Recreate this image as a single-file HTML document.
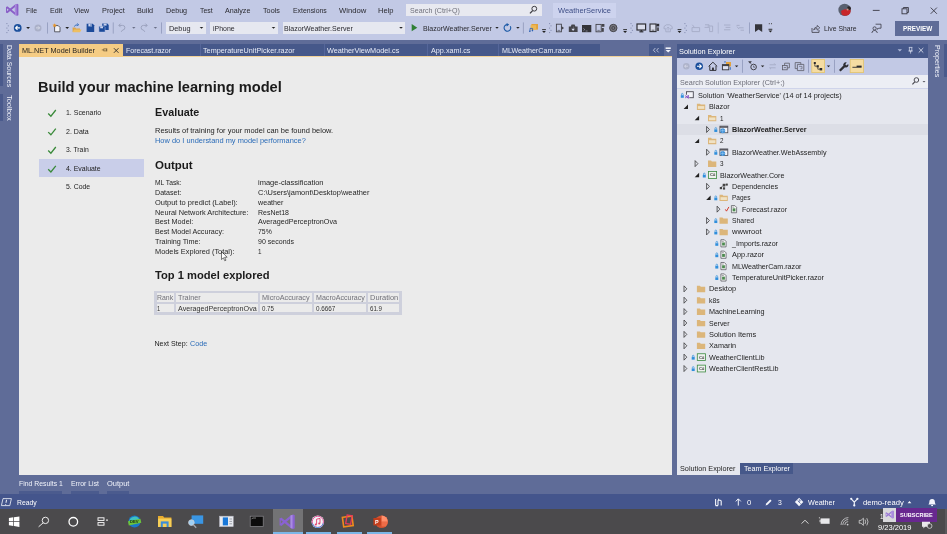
<!DOCTYPE html>
<html lang="en"><head><meta charset="utf-8"><title>WeatherService - Microsoft Visual Studio</title>
<style>
html,body{margin:0;padding:0;}
body{width:947px;height:534px;overflow:hidden;position:relative;background:#5d6b99;font-family:"Liberation Sans", sans-serif;}
.b{position:absolute;}
.t{position:absolute;white-space:nowrap;transform-origin:0 50%;font-family:"Liberation Sans", sans-serif;}
svg.ov{position:absolute;left:0;top:0;filter:blur(0.3px);}
.tx{position:absolute;left:0;top:0;width:947px;height:534px;will-change:transform;filter:blur(0.3px);}
</style></head><body>
<div class="b" style="left:0px;top:0px;width:947px;height:40px;background:#c2c9e5;"></div>
<div class="b" style="left:0px;top:40px;width:947px;height:455px;background:#5f6c98;"></div>
<div class="b" style="left:19px;top:57px;width:653px;height:418px;background:#ebebeb;"></div>
<div class="b" style="left:19px;top:56.2px;width:653px;height:0.9px;background:#f2d298;"></div>
<div class="b" style="left:0px;top:494px;width:947px;height:15px;background:#44558c;"></div>
<div class="b" style="left:0px;top:509px;width:947px;height:25px;background:#4b4a4c;"></div>
<div class="b" style="left:405.8px;top:3.7px;width:136.2px;height:12.7px;background:#e8e9f0;"></div>
<div class="b" style="left:553px;top:2.5px;width:63px;height:15.2px;background:#cdd3ee;"></div>
<div class="b" style="left:166.4px;top:21.6px;width:39.599999999999994px;height:12.5px;background:#e6e8f0;"></div>
<div class="b" style="left:210.2px;top:21.6px;width:67.5px;height:12.5px;background:#e6e8f0;"></div>
<div class="b" style="left:282.5px;top:21.6px;width:122.80000000000001px;height:12.5px;background:#e6e8f0;"></div>
<div class="b" style="left:895px;top:21.1px;width:43.7px;height:15.2px;background:#5f6c98;"></div>
<div class="b" style="left:123px;top:44px;width:477px;height:12px;background:#46588a;"></div>
<div class="b" style="left:19px;top:44px;width:104px;height:13px;background:#f5cc84;"></div>
<div class="b" style="left:200.0px;top:44px;width:1px;height:12px;background:#55669a;"></div>
<div class="b" style="left:324.2px;top:44px;width:1px;height:12px;background:#55669a;"></div>
<div class="b" style="left:426.8px;top:44px;width:1px;height:12px;background:#55669a;"></div>
<div class="b" style="left:498.1px;top:44px;width:1px;height:12px;background:#55669a;"></div>
<div class="b" style="left:649.2px;top:44px;width:14.6px;height:12px;background:#46588a;"></div>
<div class="b" style="left:39px;top:159.2px;width:104.8px;height:18.2px;background:#c9cee9;"></div>
<div class="b" style="left:154.4px;top:291.2px;width:247.2px;height:2.2px;background:#ced0dc;"></div>
<div class="b" style="left:154.4px;top:312.4px;width:247.2px;height:2.2px;background:#ced0dc;"></div>
<div class="b" style="left:154.4px;top:301.7px;width:247.2px;height:2.2px;background:#ced0dc;"></div>
<div class="b" style="left:154.4px;top:291.2px;width:2.2px;height:23.4px;background:#ced0dc;"></div>
<div class="b" style="left:399.4px;top:291.2px;width:2.2px;height:23.4px;background:#ced0dc;"></div>
<div class="b" style="left:174.0px;top:291.2px;width:2.2px;height:23.4px;background:#ced0dc;"></div>
<div class="b" style="left:258.29999999999995px;top:291.2px;width:2.2px;height:23.4px;background:#ced0dc;"></div>
<div class="b" style="left:311.5px;top:291.2px;width:2.2px;height:23.4px;background:#ced0dc;"></div>
<div class="b" style="left:365.9px;top:291.2px;width:2.2px;height:23.4px;background:#ced0dc;"></div>
<div class="b" style="left:677px;top:44px;width:251px;height:13.5px;background:#46588a;"></div>
<div class="b" style="left:677px;top:57.5px;width:251px;height:17.5px;background:#c2c9e5;"></div>
<div class="b" style="left:677px;top:75px;width:251px;height:388px;background:#e5e7ee;"></div>
<div class="b" style="left:677px;top:75.4px;width:251px;height:12.6px;background:#eceef4;"></div>
<div class="b" style="left:677px;top:88px;width:251px;height:1px;background:#cfd4ea;"></div>
<div class="b" style="left:677px;top:123.6px;width:251px;height:11.4px;background:#dcdee6;"></div>
<div class="b" style="left:677px;top:463px;width:62.7px;height:12px;background:#e5e7ee;"></div>
<div class="b" style="left:739.7px;top:463px;width:53.2px;height:11px;background:#46588a;"></div>
<div class="b" style="left:18.6px;top:490.6px;width:43.9px;height:3.4px;background:#4b5b8e;"></div>
<div class="b" style="left:71px;top:490.6px;width:28px;height:3.4px;background:#4b5b8e;"></div>
<div class="b" style="left:106.8px;top:490.6px;width:22.39999999999999px;height:3.4px;background:#4b5b8e;"></div>
<div class="b" style="left:273px;top:509px;width:30px;height:25px;background:#737375;"></div>
<div class="b" style="left:273px;top:532.3px;width:30px;height:1.7px;background:#7cb7e8;"></div>
<div class="b" style="left:306px;top:532.3px;width:25px;height:1.7px;background:#7cb7e8;"></div>
<div class="b" style="left:337px;top:532.3px;width:25px;height:1.7px;background:#7cb7e8;"></div>
<div class="b" style="left:367px;top:532.3px;width:25px;height:1.7px;background:#7cb7e8;"></div>
<div class="b" style="left:883px;top:508.2px;width:13.2px;height:13.5px;background:#d9d9dc;"></div>
<div class="b" style="left:896.2px;top:508.2px;width:40.6px;height:13.5px;background:#68288f;"></div>
<div class="b" style="left:945px;top:509px;width:2px;height:25px;background:#5a595c;"></div>
<div class="b" style="left:0px;top:43.7px;width:2.5px;height:42.7px;background:#4a5a8c;"></div>
<div class="b" style="left:0px;top:94.3px;width:2.5px;height:26.3px;background:#4a5a8c;"></div>
<div class="b" style="left:944.3px;top:44px;width:2.7px;height:33px;background:#4a5a8c;"></div>
<svg class="ov" width="947" height="534" viewBox="0 0 947 534">
<path d="M48.2 113.5 L50.9 116.2 L55.8 110.0" fill="none" stroke="#3a8a3a" stroke-width="1.3"/>
<path d="M48.2 132.10000000000002 L50.9 134.8 L55.8 128.60000000000002" fill="none" stroke="#3a8a3a" stroke-width="1.3"/>
<path d="M48.2 150.5 L50.9 153.2 L55.8 147.0" fill="none" stroke="#3a8a3a" stroke-width="1.3"/>
<path d="M48.2 169.3 L50.9 172 L55.8 165.8" fill="none" stroke="#3a8a3a" stroke-width="1.3"/>
<path d="M221.5 251.5 l0 8 l1.9 -1.7 l1.4 3 l1.2 -0.6 l-1.4 -2.9 l2.5 -0.1 z" fill="#fff" stroke="#222" stroke-width="0.6"/>
<rect x="686.5" y="91.7" width="6.8" height="6" fill="#f4f4f8" stroke="#4a4a52" stroke-width="0.9"/><rect x="684.6999999999999" y="94.7" width="4.6" height="4.2" fill="#e5e7ee"/><path d="M685.1999999999999 95.7 l1.6 1.1 l-1.6 1.1 M688.3 95.3 v3 l-1.4 -1.5 z" stroke="#7a3fc0" stroke-width="0.9" fill="none"/>
<rect x="680.8" y="95.2" width="3" height="2.6" fill="#2f8fdc"/><path d="M681.5 95.2 v-1 a0.8 0.8 0 0 1 1.6 0 v1" fill="none" stroke="#2f8fdc" stroke-width="0.7"/>
<path d="M696.9 103.685 h3 l0.9 0.9 h4.4 v5.4 h-8.3 z" fill="#dcb67a"/><path d="M697.9 106.08500000000001 h6.4 v2.8 h-6.4 z" fill="#f0e2c4"/>
<path d="M688.0 104.485 v4.4 h-4.4 z" fill="#222"/>
<path d="M708 115.07 h3 l0.9 0.9 h4.4 v5.4 h-8.3 z" fill="#dcb67a"/><path d="M709 117.47 h6.4 v2.8 h-6.4 z" fill="#f0e2c4"/>
<path d="M699.1 115.86999999999999 v4.4 h-4.4 z" fill="#222"/>
<rect x="719.9" y="126.15500000000002" width="7.9" height="6.6" fill="#f4f4f8" stroke="#4a4a52" stroke-width="0.8"/><path d="M719.9 127.055 h7.9" stroke="#4a4a52" stroke-width="1.4"/><circle cx="722.7" cy="130.655" r="2.5" fill="#3d8fd6"/><path d="M720.4 130.655 h4.6 M722.7 128.35500000000002 v4.6" stroke="#bfe0fa" stroke-width="0.4"/>
<rect x="714.3" y="129.35500000000002" width="3" height="2.6" fill="#2f8fdc"/><path d="M715.0 129.35500000000002 v-1 a0.8 0.8 0 0 1 1.6 0 v1" fill="none" stroke="#2f8fdc" stroke-width="0.7"/>
<path d="M706.6 126.45500000000001 l2.8 3 l-2.8 3 z" fill="none" stroke="#222" stroke-width="0.7"/>
<path d="M708 137.84 h3 l0.9 0.9 h4.4 v5.4 h-8.3 z" fill="#dcb67a"/><path d="M709 140.24 h6.4 v2.8 h-6.4 z" fill="#f0e2c4"/>
<path d="M699.1 138.64000000000001 v4.4 h-4.4 z" fill="#222"/>
<rect x="719.9" y="148.925" width="7.9" height="6.6" fill="#f4f4f8" stroke="#4a4a52" stroke-width="0.8"/><path d="M719.9 149.82500000000002 h7.9" stroke="#4a4a52" stroke-width="1.4"/><circle cx="722.7" cy="153.425" r="2.5" fill="#3d8fd6"/><path d="M720.4 153.425 h4.6 M722.7 151.12500000000003 v4.6" stroke="#bfe0fa" stroke-width="0.4"/>
<rect x="714.3" y="152.12500000000003" width="3" height="2.6" fill="#2f8fdc"/><path d="M715.0 152.12500000000003 v-1 a0.8 0.8 0 0 1 1.6 0 v1" fill="none" stroke="#2f8fdc" stroke-width="0.7"/>
<path d="M706.6 149.22500000000002 l2.8 3 l-2.8 3 z" fill="none" stroke="#222" stroke-width="0.7"/>
<path d="M708 160.61 h3 l0.9 0.9 h4.4 v5.4 h-8.3 z" fill="#dcb67a"/>
<path d="M695.1 160.61 l2.8 3 l-2.8 3 z" fill="none" stroke="#222" stroke-width="0.7"/>
<rect x="708.4" y="171.595" width="8.2" height="6.8" fill="#eef1ee" stroke="#3b8a3f" stroke-width="0.8"/>
<rect x="702.8" y="174.895" width="3" height="2.6" fill="#2f8fdc"/><path d="M703.5 174.895 v-1 a0.8 0.8 0 0 1 1.6 0 v1" fill="none" stroke="#2f8fdc" stroke-width="0.7"/>
<path d="M699.1 172.79500000000002 v4.4 h-4.4 z" fill="#222"/>
<rect x="719.8" y="186.98" width="2.2" height="2.2" fill="#444"/><rect x="722.7" y="183.78" width="2.6" height="2.6" fill="#444"/><rect x="722.9" y="187.38" width="2.2" height="2.2" fill="#444"/><rect x="725.8" y="183.57999999999998" width="2" height="2" fill="#444"/><path d="M720.9 187.38 l2 -1.4 M724.0 186.38 v1.2 M725.3 184.78 h1" stroke="#444" stroke-width="0.6"/>
<path d="M706.6 183.38 l2.8 3 l-2.8 3 z" fill="none" stroke="#222" stroke-width="0.7"/>
<path d="M719.5 194.76500000000001 h3 l0.9 0.9 h4.4 v5.4 h-8.3 z" fill="#dcb67a"/><path d="M720.5 197.16500000000002 h6.4 v2.8 h-6.4 z" fill="#f0e2c4"/>
<rect x="714.3" y="197.66500000000002" width="3" height="2.6" fill="#2f8fdc"/><path d="M715.0 197.66500000000002 v-1 a0.8 0.8 0 0 1 1.6 0 v1" fill="none" stroke="#2f8fdc" stroke-width="0.7"/>
<path d="M710.6 195.56500000000003 v4.4 h-4.4 z" fill="#222"/>
<path d="M731.4 205.55 h3.4 l1.8 1.8 v5.4 h-5.2 z" fill="#f7f7f7" stroke="#4a4a52" stroke-width="0.7"/><path d="M732.6 208.35 h2.8 v3 h-2.8 z" fill="#4d8a50"/><path d="M732.3000000000001 207.15 h2" stroke="#4a4a52" stroke-width="0.5"/>
<path d="M725.3 209.35 l1.2 1.8 l2.4 -4.2" fill="none" stroke="#d33a2c" stroke-width="1"/>
<path d="M717.1 206.15 l2.8 3 l-2.8 3 z" fill="none" stroke="#222" stroke-width="0.7"/>
<path d="M719.5 217.53500000000003 h3 l0.9 0.9 h4.4 v5.4 h-8.3 z" fill="#dcb67a"/>
<rect x="714.3" y="220.43500000000003" width="3" height="2.6" fill="#2f8fdc"/><path d="M715.0 220.43500000000003 v-1 a0.8 0.8 0 0 1 1.6 0 v1" fill="none" stroke="#2f8fdc" stroke-width="0.7"/>
<path d="M706.6 217.53500000000003 l2.8 3 l-2.8 3 z" fill="none" stroke="#222" stroke-width="0.7"/>
<path d="M719.5 228.92000000000002 h3 l0.9 0.9 h4.4 v5.4 h-8.3 z" fill="#dcb67a"/>
<rect x="714.3" y="231.82000000000002" width="3" height="2.6" fill="#2f8fdc"/><path d="M715.0 231.82000000000002 v-1 a0.8 0.8 0 0 1 1.6 0 v1" fill="none" stroke="#2f8fdc" stroke-width="0.7"/>
<path d="M706.6 228.92000000000002 l2.8 3 l-2.8 3 z" fill="none" stroke="#222" stroke-width="0.7"/>
<path d="M720.9 239.705 h3.4 l1.8 1.8 v5.4 h-5.2 z" fill="#f7f7f7" stroke="#4a4a52" stroke-width="0.7"/><path d="M722.1 242.505 h2.8 v3 h-2.8 z" fill="#4d8a50"/><path d="M721.8000000000001 241.305 h2" stroke="#4a4a52" stroke-width="0.5"/>
<rect x="715.3" y="243.205" width="3" height="2.6" fill="#2f8fdc"/><path d="M716.0 243.205 v-1 a0.8 0.8 0 0 1 1.6 0 v1" fill="none" stroke="#2f8fdc" stroke-width="0.7"/>
<path d="M720.9 251.09 h3.4 l1.8 1.8 v5.4 h-5.2 z" fill="#f7f7f7" stroke="#4a4a52" stroke-width="0.7"/><path d="M722.1 253.89 h2.8 v3 h-2.8 z" fill="#4d8a50"/><path d="M721.8000000000001 252.69 h2" stroke="#4a4a52" stroke-width="0.5"/>
<rect x="715.3" y="254.59" width="3" height="2.6" fill="#2f8fdc"/><path d="M716.0 254.59 v-1 a0.8 0.8 0 0 1 1.6 0 v1" fill="none" stroke="#2f8fdc" stroke-width="0.7"/>
<path d="M720.9 262.47499999999997 h3.4 l1.8 1.8 v5.4 h-5.2 z" fill="#f7f7f7" stroke="#4a4a52" stroke-width="0.7"/><path d="M722.1 265.275 h2.8 v3 h-2.8 z" fill="#4d8a50"/><path d="M721.8000000000001 264.075 h2" stroke="#4a4a52" stroke-width="0.5"/>
<rect x="715.3" y="265.97499999999997" width="3" height="2.6" fill="#2f8fdc"/><path d="M716.0 265.97499999999997 v-1 a0.8 0.8 0 0 1 1.6 0 v1" fill="none" stroke="#2f8fdc" stroke-width="0.7"/>
<path d="M720.9 273.85999999999996 h3.4 l1.8 1.8 v5.4 h-5.2 z" fill="#f7f7f7" stroke="#4a4a52" stroke-width="0.7"/><path d="M722.1 276.65999999999997 h2.8 v3 h-2.8 z" fill="#4d8a50"/><path d="M721.8000000000001 275.46 h2" stroke="#4a4a52" stroke-width="0.5"/>
<rect x="715.3" y="277.35999999999996" width="3" height="2.6" fill="#2f8fdc"/><path d="M716.0 277.35999999999996 v-1 a0.8 0.8 0 0 1 1.6 0 v1" fill="none" stroke="#2f8fdc" stroke-width="0.7"/>
<path d="M696.9 285.84499999999997 h3 l0.9 0.9 h4.4 v5.4 h-8.3 z" fill="#dcb67a"/>
<path d="M684.0 285.84499999999997 l2.8 3 l-2.8 3 z" fill="none" stroke="#222" stroke-width="0.7"/>
<path d="M696.9 297.23 h3 l0.9 0.9 h4.4 v5.4 h-8.3 z" fill="#dcb67a"/>
<path d="M684.0 297.23 l2.8 3 l-2.8 3 z" fill="none" stroke="#222" stroke-width="0.7"/>
<path d="M696.9 308.615 h3 l0.9 0.9 h4.4 v5.4 h-8.3 z" fill="#dcb67a"/>
<path d="M684.0 308.615 l2.8 3 l-2.8 3 z" fill="none" stroke="#222" stroke-width="0.7"/>
<path d="M696.9 320.0 h3 l0.9 0.9 h4.4 v5.4 h-8.3 z" fill="#dcb67a"/>
<path d="M684.0 320.0 l2.8 3 l-2.8 3 z" fill="none" stroke="#222" stroke-width="0.7"/>
<path d="M696.9 331.38500000000005 h3 l0.9 0.9 h4.4 v5.4 h-8.3 z" fill="#dcb67a"/>
<path d="M684.0 331.38500000000005 l2.8 3 l-2.8 3 z" fill="none" stroke="#222" stroke-width="0.7"/>
<path d="M696.9 342.77000000000004 h3 l0.9 0.9 h4.4 v5.4 h-8.3 z" fill="#dcb67a"/>
<path d="M684.0 342.77000000000004 l2.8 3 l-2.8 3 z" fill="none" stroke="#222" stroke-width="0.7"/>
<rect x="697.3" y="353.75500000000005" width="8.2" height="6.8" fill="#eef1ee" stroke="#3b8a3f" stroke-width="0.8"/>
<rect x="691.6999999999999" y="357.055" width="3" height="2.6" fill="#2f8fdc"/><path d="M692.4 357.055 v-1 a0.8 0.8 0 0 1 1.6 0 v1" fill="none" stroke="#2f8fdc" stroke-width="0.7"/>
<path d="M684.0 354.15500000000003 l2.8 3 l-2.8 3 z" fill="none" stroke="#222" stroke-width="0.7"/>
<rect x="697.3" y="365.14000000000004" width="8.2" height="6.8" fill="#eef1ee" stroke="#3b8a3f" stroke-width="0.8"/>
<rect x="691.6999999999999" y="368.44" width="3" height="2.6" fill="#2f8fdc"/><path d="M692.4 368.44 v-1 a0.8 0.8 0 0 1 1.6 0 v1" fill="none" stroke="#2f8fdc" stroke-width="0.7"/>
<path d="M684.0 365.54 l2.8 3 l-2.8 3 z" fill="none" stroke="#222" stroke-width="0.7"/>
<path d="M6.80 7.00 L15.40 14.00 M6.80 12.60 L15.40 5.60" stroke="#8a5fc8" stroke-width="1.90" fill="none"/>
<path d="M6.50 6.80 V12.80" stroke="#8a5fc8" stroke-width="1.00" fill="none"/>
<path d="M14.90 4.70 L17.20 3.80 L18.40 4.40 V15.20 L17.20 15.80 L14.90 14.90 z" fill="#8a5fc8"/>
<path d="M14.90 4.70 L16.60 4.10 V15.50 L14.90 14.90 z" fill="#a888dc"/>
<circle cx="534.3" cy="8.7" r="2.4" fill="none" stroke="#3a3a40" stroke-width="1"/><path d="M532.6 10.6 l-2.6 2.8" stroke="#3a3a40" stroke-width="1.3"/>
<circle cx="844.6" cy="9.9" r="6.2" fill="#596070"/><path d="M841 11 q3 -2.4 6 -1.6 l3 -0.4 q1.4 1.6 0.2 4.2 a6.2 6.2 0 0 1 -8.4 1.6 z" fill="#c8262a"/><circle cx="849" cy="8.2" r="1.9" fill="#2c2628"/><circle cx="847.6" cy="9.6" r="1" fill="#c89a8a"/>
<path d="M872.8 10.4 h6.8" stroke="#3a3a45" stroke-width="0.9"/>
<rect x="902" y="8.8" width="5" height="5" fill="none" stroke="#3a3a45" stroke-width="0.9"/><path d="M903.4 8.8 v-1.3 h5 v5 h-1.4" fill="none" stroke="#3a3a45" stroke-width="0.9"/>
<path d="M930.7 7.6 l6.2 6.2 M936.9 7.6 l-6.2 6.2" stroke="#3a3a45" stroke-width="0.9"/>
<rect x="6.3999999999999995" y="23.1" width="1" height="1" fill="#7f88ad"/>
<rect x="7.8" y="25.35" width="1" height="1" fill="#7f88ad"/>
<rect x="6.3999999999999995" y="27.6" width="1" height="1" fill="#7f88ad"/>
<rect x="7.8" y="29.85" width="1" height="1" fill="#7f88ad"/>
<rect x="6.3999999999999995" y="32.1" width="1" height="1" fill="#7f88ad"/>
<circle cx="17.7" cy="27.9" r="3.9" fill="#1b4f9c"/><path d="M19.9 27.9 h-4 M17.5 26 l-1.9 1.9 l1.9 1.9" fill="none" stroke="#fff" stroke-width="1.1"/>
<path d="M26.200000000000003 27 h3.8 l-1.9 1.9 z" fill="#222"/>
<circle cx="38" cy="27.9" r="3.5" fill="#aab0c8"/><path d="M36 27.9 h3.6 M38 26.3 l1.6 1.6 l-1.6 1.6" fill="none" stroke="#d9dcea" stroke-width="0.9"/>
<rect x="47.1" y="22.4" width="0.8" height="11.200000000000003" fill="#8f98ba"/>
<path d="M54.6 25.6 h3.6 l1.8 1.8 v4.4 h-5.4 z" fill="#f2f3f8" stroke="#3c3c44" stroke-width="0.8"/><path d="M54.6 23.2 l0.6 1.4 l1.5 0.1 l-1.1 1 l0.4 1.5 l-1.4 -0.8 l-1.4 0.8 l0.4 -1.5 l-1.1 -1 l1.5 -0.1 z" fill="#e8962a"/>
<path d="M65.3 27 h3.8 l-1.9 1.9 z" fill="#222"/>
<path d="M72.6 27.6 h2.6 l0.8 0.9 h4 v3.6 h-7.4 z" fill="#dca54a"/><path d="M74 29.6 h7.6 l-1.6 2.6 h-7.4 z" fill="#eebf62"/><path d="M74.4 26.6 q0.6 -2 3 -1.8 M77.4 23.4 l1.2 1.6 l-1.8 0.6" fill="none" stroke="#2a66b8" stroke-width="0.9"/>
<path d="M86.6 23.8 h6.2 l1.4 1.4 v6.7 h-7.6 z" fill="#1b4a9a"/><rect x="88.4" y="23.8" width="3.6" height="2.6" fill="#c9d2ee"/><rect x="90.6" y="24.1" width="0.9" height="1.8" fill="#1b4a9a"/>
<path d="M102.2 23.6 h5.2 l1.3 1.3 v5 h-6.5 z" fill="#1b4a9a"/><rect x="103.6" y="23.6" width="3" height="2" fill="#c9d2ee"/><path d="M98.9 26.2 h5 l1.2 1.2 v4.7 h-6.2 z" fill="#1b4a9a" stroke="#c5cce8" stroke-width="0.5"/><rect x="100.2" y="26.4" width="2.8" height="1.9" fill="#c9d2ee"/>
<rect x="112.8" y="22.4" width="0.8" height="11.200000000000003" fill="#8f98ba"/>
<path d="M119 25.4 h3.6 a2.3 2.3 0 0 1 0 4.6 l-1.4 1.8 M120.6 23.6 l-1.8 1.8 l1.8 1.8" fill="none" stroke="#9ba2bd" stroke-width="1"/>
<path d="M132.10000000000002 27 h3.4 l-1.7 1.7 z" fill="#6a7088"/>
<path d="M147 25.4 h-3.6 a2.3 2.3 0 0 0 0 4.6 l1.4 1.8 M145.4 23.6 l1.8 1.8 l-1.8 1.8" fill="none" stroke="#9ba2bd" stroke-width="1"/>
<path d="M153.70000000000002 27 h3.4 l-1.7 1.7 z" fill="#6a7088"/>
<rect x="161.2" y="22.4" width="0.8" height="11.200000000000003" fill="#8f98ba"/>
<path d="M199.7 27 h3.6 l-1.8 1.8 z" fill="#222"/>
<path d="M271.7 27 h3.6 l-1.8 1.8 z" fill="#222"/>
<path d="M399.2 27 h3.6 l-1.8 1.8 z" fill="#222"/>
<path d="M411.7 24.1 l5.6 3.6 l-5.6 3.6 z" fill="#2f7f34"/>
<path d="M495.3 27 h3.4 l-1.7 1.7 z" fill="#222"/>
<path d="M510.3 26.3 a3.3 3.3 0 1 1 -2.8 -1.7" fill="none" stroke="#1c5aa6" stroke-width="1.1"/><path d="M506.6 22.9 l2.6 1.6 l-2.4 1.9 z" fill="#1c5aa6"/>
<path d="M516.1999999999999 27 h3.4 l-1.7 1.7 z" fill="#222"/>
<rect x="522.9" y="22.4" width="0.8" height="11.200000000000003" fill="#8f98ba"/>
<rect x="531.4" y="24" width="6.6" height="5.6" fill="#e2a23c"/><rect x="530.6" y="25.2" width="5.6" height="4.6" fill="#ecb856"/><path d="M530 31.4 v-3 h2.6 v2.2" fill="none" stroke="#2a5fb0" stroke-width="0.8"/><circle cx="529.8" cy="31.2" r="0.8" fill="#2a5fb0"/><circle cx="532.4" cy="30.6" r="0.8" fill="#2a5fb0"/>
<rect x="542.1" y="29.2" width="3.8" height="0.9" fill="#222"/><path d="M542.1 30.9 h3.8 l-1.9 2 z" fill="#222"/>
<rect x="549.0999999999999" y="23.1" width="1" height="1" fill="#7f88ad"/>
<rect x="550.5" y="25.35" width="1" height="1" fill="#7f88ad"/>
<rect x="549.0999999999999" y="27.6" width="1" height="1" fill="#7f88ad"/>
<rect x="550.5" y="29.85" width="1" height="1" fill="#7f88ad"/>
<rect x="549.0999999999999" y="32.1" width="1" height="1" fill="#7f88ad"/>
<rect x="556.4" y="24.2" width="5" height="7.6" fill="none" stroke="#44444a" stroke-width="0.9"/><path d="M561.4 26 l2.6 2 l-2.6 2 z" fill="#44444a"/><path d="M557.6 30.4 h2.6" stroke="#44444a" stroke-width="0.6"/>
<path d="M568.8 26.4 h2 l0.8 -1.8 h3 l0.8 1.8 h2.2 v5.6 h-8.8 z" fill="#44444a"/><path d="M573.2 26.6 v2.2 h1.6 l-1.7 2.2 l-1.7 -2.2 h1.6 v-2.2 z" fill="#d8dcee"/>
<rect x="582" y="25" width="9.3" height="7.2" fill="#333338"/><path d="M583.4 28.4 l1.4 1.2 l-1.4 1.2 M585.6 31 h2" stroke="#c8cce0" stroke-width="0.5" fill="none"/>
<rect x="596" y="24.4" width="5.2" height="7.4" fill="none" stroke="#44444a" stroke-width="0.9"/><rect x="601.6" y="24" width="2.8" height="2.8" fill="#44444a"/><rect x="601.6" y="28" width="2.2" height="3.8" fill="#44444a"/><path d="M597.4 30.4 h2.4" stroke="#44444a" stroke-width="0.6"/>
<circle cx="613.3" cy="28" r="3.7" fill="#77777e" stroke="#44444a" stroke-width="1"/><circle cx="613.3" cy="28" r="1.5" fill="none" stroke="#3a3a40" stroke-width="0.8"/>
<rect x="623.2" y="29.2" width="3.8" height="0.9" fill="#222"/><path d="M623.2 30.9 h3.8 l-1.9 2 z" fill="#222"/>
<rect x="630.5" y="23.1" width="1" height="1" fill="#7f88ad"/>
<rect x="631.9000000000001" y="25.35" width="1" height="1" fill="#7f88ad"/>
<rect x="630.5" y="27.6" width="1" height="1" fill="#7f88ad"/>
<rect x="631.9000000000001" y="29.85" width="1" height="1" fill="#7f88ad"/>
<rect x="630.5" y="32.1" width="1" height="1" fill="#7f88ad"/>
<rect x="637" y="24" width="8.6" height="6" fill="#d9dcea" stroke="#2e2e33" stroke-width="1.2"/><rect x="639.4" y="31.2" width="4" height="1.2" fill="#2e2e33"/><rect x="640.6" y="30" width="1.6" height="1.6" fill="#2e2e33"/>
<rect x="650" y="24" width="6" height="7.6" fill="#d9dcea" stroke="#2e2e33" stroke-width="1.1"/><rect x="656.4" y="23.8" width="2.8" height="2.6" fill="#2e2e33"/><rect x="656.8" y="27.4" width="2.2" height="3.6" fill="#55555c"/><path d="M651.6 30.2 h2.8" stroke="#2e2e33" stroke-width="0.7"/>
<path d="M664 26.6 l2.4 -1.8 h3.4 l2.4 1.8 v2.2 h-1.8 v3 h-4.6 v-3 h-1.8 z" fill="none" stroke="#a5abc6" stroke-width="0.9"/><path d="M668.1 27 v3.6 M666.6 28.6 l1.5 -1.6 l1.5 1.6" fill="none" stroke="#a5abc6" stroke-width="0.8"/>
<rect x="677.6" y="29.2" width="3.8" height="0.9" fill="#222"/><path d="M677.6 30.9 h3.8 l-1.9 2 z" fill="#222"/>
<rect x="684.4" y="23.1" width="1" height="1" fill="#7f88ad"/>
<rect x="685.8000000000001" y="25.35" width="1" height="1" fill="#7f88ad"/>
<rect x="684.4" y="27.6" width="1" height="1" fill="#7f88ad"/>
<rect x="685.8000000000001" y="29.85" width="1" height="1" fill="#7f88ad"/>
<rect x="684.4" y="32.1" width="1" height="1" fill="#7f88ad"/>
<path d="M692.4 24.8 l1.8 2.4 M692 27.6 h7.6 v4 h-7.6 z" fill="none" stroke="#a5abc6" stroke-width="0.9"/>
<path d="M705 24.8 h4 v1.6 M704.6 27.4 h5 v4.2 M707.6 26 h5 v5.6 h-3" fill="none" stroke="#a5abc6" stroke-width="0.9"/>
<rect x="717.8000000000001" y="22.4" width="0.8" height="11.200000000000003" fill="#aab1cd"/>
<path d="M724 25 h6.4 M725.6 27.4 h4.8 M724 29.8 h6.4" stroke="#a5abc6" stroke-width="0.9"/>
<path d="M736.6 25.4 h3 M739 27.8 h4.6 M740.6 30.2 h3.4 M737 26.6 l2 2.4" stroke="#a5abc6" stroke-width="0.9" fill="none"/>
<rect x="749.1" y="22.4" width="0.8" height="11.200000000000003" fill="#8f98ba"/>
<path d="M755 24.3 h7.2 v7.6 l-3.6 -2.4 l-3.6 2.4 z" fill="#34343a"/>
<rect x="768.5" y="28.8" width="3.8" height="0.9" fill="#222"/><path d="M768.5 30.5 h3.8 l-1.9 2 z" fill="#222"/>
<rect x="768.8" y="23.200000000000003" width="1" height="1" fill="#444"/><rect x="771.0" y="23.200000000000003" width="1" height="1" fill="#444"/>
<path d="M812 28 v4.4 h7 v-2.4" fill="none" stroke="#4a4a55" stroke-width="0.9"/><path d="M813.6 30 q0.6 -3 3.6 -3 v-1.6 l2.6 2.4 l-2.6 2.4 v-1.6 q-2 -0.2 -3.6 1.4 z" fill="none" stroke="#4a4a55" stroke-width="0.8"/>
<circle cx="874.6" cy="28.4" r="1.6" fill="none" stroke="#3a3a45" stroke-width="0.8"/><path d="M871.8 33 q0.4 -2.6 2.8 -2.6 q2.2 0 2.8 2.6" fill="none" stroke="#3a3a45" stroke-width="0.8"/><path d="M875.6 24.2 h5.4 v4 h-2.4 l-1.2 1.2 v-1.2" fill="none" stroke="#3a3a45" stroke-width="0.8"/>
<rect x="103.8" y="48.9" width="2.8" height="2" fill="none" stroke="#6a5532" stroke-width="0.7"/><path d="M106.8 48.4 v3 M101.8 49.9 h2" stroke="#6a5532" stroke-width="0.7"/>
<path d="M113.9 48.2 l4.6 4.6 M118.5 48.2 l-4.6 4.6" stroke="#2a2a2a" stroke-width="0.9"/>
<path d="M655.4 48 l-2 2.2 l2 2.2 M658.6 48 l-2 2.2 l2 2.2" fill="none" stroke="#e6eaf8" stroke-width="0.7"/>
<rect x="665.6" y="47.4" width="5.2" height="1.6" fill="#f0f2fa"/><path d="M665.6 50 h5.2 l-2.6 2.6 z" fill="#f0f2fa"/>
<path d="M897.6 49.2 h4.4 l-2.2 2.4 z" fill="#aeb8d8"/>
<path d="M908.8 47.4 h3.6 M909.4 47.4 v3.6 h2.4 v-3.6 M908.4 51 h4.4 M910.6 51 v2.6" fill="none" stroke="#dfe4f4" stroke-width="0.7"/>
<path d="M918.7 48 l4.6 4.6 M923.3 48 l-4.6 4.6" stroke="#eef0fa" stroke-width="0.8"/>
<circle cx="686.3" cy="66.2" r="3.3" fill="#adb3ca"/><path d="M688 66.2 h-3.4 M686.2 64.7 l-1.6 1.5 l1.6 1.5" fill="none" stroke="#d9dcea" stroke-width="0.8"/>
<circle cx="699.2" cy="66.2" r="3.8" fill="#1b4f9c"/><path d="M697 66.2 h4 M699.4 64.3 l1.9 1.9 l-1.9 1.9" fill="none" stroke="#fff" stroke-width="1.1"/>
<path d="M708.6 66.4 l4.3 -4.2 l4.3 4.2 M709.8 65.8 v4.6 h6.2 v-4.6" fill="none" stroke="#34343a" stroke-width="1"/><rect x="712" y="67.60000000000001" width="1.9" height="2.8" fill="#34343a"/>
<rect x="726" y="62.0" width="5" height="4.4" fill="#e2a23c"/><rect x="722.4" y="64.60000000000001" width="6.4" height="5.2" fill="#dfe3f2" stroke="#34343a" stroke-width="0.9"/><path d="M722.4 65.60000000000001 h6.4" stroke="#34343a" stroke-width="1"/><path d="M724 62.2 q1 -1 2 0 M730.4 67.2 v2.6" stroke="#2a66b8" stroke-width="0.8" fill="none"/>
<path d="M734.9 65.60000000000001 h3.4 l-1.7 1.7 z" fill="#222"/>
<rect x="742.1" y="59.6" width="0.8" height="13.199999999999996" fill="#8f98ba"/>
<circle cx="753.6" cy="67.0" r="2.8" fill="none" stroke="#34343a" stroke-width="0.9"/><path d="M753.6 65.60000000000001 v1.6 h1.4" fill="none" stroke="#34343a" stroke-width="0.6"/><path d="M748.6 61.6 h2.8 l-1.4 1.6 z M750.2 62.800000000000004 l1.4 1.6" fill="#34343a" stroke="#34343a" stroke-width="0.5"/>
<path d="M760.9 65.60000000000001 h3.4 l-1.7 1.7 z" fill="#222"/>
<path d="M769.6 64.8 h6 l-1.4 -1.4 M775.6 67.8 h-6 l1.4 1.4" fill="none" stroke="#a5abc6" stroke-width="0.9"/>
<rect x="782.6" y="65.4" width="4.6" height="4.4" fill="none" stroke="#5c5c66" stroke-width="0.8"/><path d="M784.6 65.4 v-2.2 h4.8 v4.6 h-2.2" fill="none" stroke="#5c5c66" stroke-width="0.8"/><path d="M783.8 67.60000000000001 h2.2" stroke="#5c5c66" stroke-width="0.7"/>
<path d="M795.2 62.6 h5.6 v1.8 M797.4 64.4 h6.4 v6.2 h-6.4 z M795.2 62.6 v6 h2" fill="none" stroke="#5c5c66" stroke-width="0.8"/><path d="M799 66.4 h3 v2.4 h-1.6" fill="none" stroke="#5c5c66" stroke-width="0.6"/>
<rect x="808.2" y="59.6" width="0.8" height="13.199999999999996" fill="#8f98ba"/>
<rect x="811.8" y="59.4" width="12.8" height="13.2" fill="#f5dca2" stroke="#e4c469" stroke-width="0.8"/>
<rect x="813.8" y="62.0" width="2" height="2" fill="#2a2a2e"/><rect x="816.6" y="65.2" width="2.2" height="2.2" fill="#2a2a2e"/><rect x="819.6" y="68.0" width="2.6" height="2.4" fill="#2a2a2e"/><path d="M814.8 63.800000000000004 v2.4 h2 M817.8 67.2 v2 h2" fill="none" stroke="#2a2a2e" stroke-width="0.7"/>
<path d="M826.8 65.60000000000001 h3.4 l-1.7 1.7 z" fill="#222"/>
<rect x="834.0" y="59.6" width="0.8" height="13.199999999999996" fill="#8f98ba"/>
<path d="M839 70.0 l4.4 -4.4 a2.4 2.4 0 0 1 3.4 -3 l-1.6 1.6 l1.4 1.4 l1.6 -1.6 a2.4 2.4 0 0 1 -3.2 3.2 l-4.4 4.4 z" fill="#2e2e33"/>
<rect x="850.2" y="59.4" width="13.2" height="13.2" fill="#f5dca2" stroke="#e4c469" stroke-width="0.8"/>
<rect x="852.4" y="66.8" width="9.2" height="0.9" fill="#2a2a2e"/><rect x="856.6" y="65.60000000000001" width="5" height="1.4" fill="#2a2a2e"/>
<circle cx="916.4" cy="80" r="2.3" fill="none" stroke="#4a4a52" stroke-width="1"/><path d="M914.8 81.8 l-2.4 2.6" stroke="#4a4a52" stroke-width="1.2"/>
<path d="M922.5 81 h3 l-1.5 1.5 z" fill="#5a5a64"/>
<path d="M3 498.6 h8.4 l-1.6 7 h-8.4 z" fill="none" stroke="#f4f6fc" stroke-width="0.8"/><path d="M6.5 499.8 l-0.5 3 M5.7 504.2 l-0.1 0.7" stroke="#f4f6fc" stroke-width="1"/>
<path d="M715.6 499 v6.6 M718 500.2 v5.4 M715.6 505.6 h2.4 M718 500.2 h2.2 a1 1 0 0 1 1 1 v4.4" fill="none" stroke="#f4f6fc" stroke-width="1.1"/><path d="M718 498.4 l1.6 0.9 l-1.6 0.9 z" fill="#f4f6fc"/>
<path d="M738.3 505.6 v-6.6 M735.8 501.4 l2.5 -2.6 l2.5 2.6" fill="none" stroke="#f4f6fc" stroke-width="1"/>
<path d="M765.6 505.4 l0.6 -2 l4 -4 l1.4 1.4 l-4 4 z" fill="#f4f6fc"/>
<path d="M799.1 497.8 l4.2 4.2 l-4.2 4.2 l-4.2 -4.2 z" fill="#f4f6fc"/><path d="M797.6 500.6 l3 3 M799.2 502.2 v-2.6 l1.6 1.4" stroke="#44558c" stroke-width="0.7" fill="none"/>
<path d="M851.2 498.8 l3.1 3.4 l3.1 -3.4 M854.3 502.2 v3.6" fill="none" stroke="#f4f6fc" stroke-width="1.1"/><circle cx="851.2" cy="498.8" r="1.1" fill="#f4f6fc"/><circle cx="857.4" cy="498.8" r="1.1" fill="#f4f6fc"/><circle cx="854.3" cy="505.4" r="1.1" fill="#f4f6fc"/>
<path d="M907.6 503.2 h3.8 l-1.9 -2.2 z" fill="#f4f6fc"/>
<path d="M928.4 504.6 q1 -0.8 1 -3 a2.7 2.7 0 0 1 5.4 0 q0 2.2 1 3 z" fill="#f4f6fc"/><rect x="931.2" y="505" width="1.8" height="1.1" fill="#f4f6fc"/>
<path d="M8.9 518 l4.4 -0.7 v4 h-4.4 z M14 517.2 l5.4 -0.8 v4.9 h-5.4 z M8.9 522 h4.4 v4 l-4.4 -0.7 z M14 522 h5.4 v4.9 l-5.4 -0.8 z" fill="#ffffff"/>
<circle cx="45.4" cy="520.4" r="3.2" fill="none" stroke="#fff" stroke-width="0.9"/><path d="M43.2 522.8 l-4.6 4" stroke="#fff" stroke-width="0.9"/>
<circle cx="73.3" cy="521.8" r="4.3" fill="none" stroke="#fff" stroke-width="1.3"/>
<rect x="98" y="517.8" width="6" height="2.6" fill="none" stroke="#fff" stroke-width="0.9"/><rect x="98" y="522.6" width="6" height="2.6" fill="none" stroke="#fff" stroke-width="0.9"/><rect x="106" y="519.6" width="2" height="1" fill="#fff"/>
<circle cx="134.5" cy="521.6" r="6" fill="#1a78c8"/><path d="M129.4 521 a5.2 5.2 0 0 1 10 -1 h-6.4 a2.2 2.2 0 0 0 0.6 3 z" fill="#3fc2c0"/><rect x="128.2" y="520" width="12.8" height="4.2" fill="#6cc23a" transform="rotate(-12 134.5 522)"/>
<path d="M158 516 h5 l1.2 1.4 h7.2 v9.6 h-13.4 z" fill="#e8ac2e"/><rect x="158" y="518.6" width="13.4" height="8.4" fill="#f7cf57"/><rect x="160.8" y="521.4" width="7.8" height="5.6" fill="#3d8ed8"/><rect x="162.8" y="523.6" width="3.8" height="3.4" fill="#f7cf57"/>
<rect x="191.6" y="515.4" width="11.6" height="8.4" fill="#3a96e4"/><circle cx="191.4" cy="522.6" r="2.8" fill="#9fd0f4" stroke="#c8cdd6" stroke-width="0.9"/><path d="M193.4 524.8 l2.8 3" stroke="#a0a4ac" stroke-width="1.3"/>
<rect x="219.6" y="516.2" width="13.6" height="10.4" fill="#e9ebf0" stroke="#b9bcc6" stroke-width="0.6"/><rect x="222.8" y="517.4" width="5.2" height="8" fill="#1877d8"/><path d="M229.4 519 h2.6 M229.4 521.4 h2.6 M229.4 523.8 h2.6" stroke="#8a8e98" stroke-width="0.8"/>
<rect x="250.2" y="516.2" width="13" height="10.2" fill="#0c0c0c" stroke="#8c8c90" stroke-width="0.7"/><path d="M251.6 518.8 l1.4 -0.8 h3" stroke="#c8c8c8" stroke-width="0.6" fill="none"/>
<path d="M280.58 518.30 L291.07 526.84 M280.58 525.14 L291.07 516.60" stroke="#8a62d2" stroke-width="2.32" fill="none"/>
<path d="M280.21 518.06 V525.38" stroke="#8a62d2" stroke-width="1.22" fill="none"/>
<path d="M290.46 515.50 L293.26 514.40 L294.73 515.13 V528.31 L293.26 529.04 L290.46 527.94 z" fill="#8a62d2"/>
<path d="M290.46 515.50 L292.53 514.77 V528.67 L290.46 527.94 z" fill="#a98be2"/>
<circle cx="317.8" cy="521.8" r="6.3" fill="#f4f2f8"/><circle cx="317.8" cy="521.8" r="5.6" fill="none" stroke="#e0559a" stroke-width="1"/><path d="M312.4 523.4 a5.6 5.6 0 0 0 10.8 0" fill="none" stroke="#4a9ae8" stroke-width="1"/><path d="M316.6 524.4 v-5.2 l3.4 -0.8 v5" fill="none" stroke="#e0406a" stroke-width="0.9"/><circle cx="315.8" cy="524.4" r="1" fill="#e0406a"/><circle cx="319.2" cy="523.6" r="1" fill="#e0406a"/>
<rect x="343" y="516.6" width="9.6" height="9.6" fill="none" stroke="#f08a1c" stroke-width="1.6" transform="rotate(-8 347.8 521.4)"/><rect x="346.4" y="515.4" width="5" height="8.6" fill="none" stroke="#e83a5a" stroke-width="1.3" transform="rotate(10 349 519.6)"/>
<circle cx="381.6" cy="521.8" r="6.3" fill="#d35230"/><path d="M381.6 515.5 a6.3 6.3 0 0 1 6.3 6.3 h-6.3 z" fill="#ff8f6b"/><path d="M381.6 521.8 h6.3 a6.3 6.3 0 0 1 -2 4.6 h-4.3 z" fill="#ed6c47"/><rect x="373.4" y="518" width="7.4" height="7.4" fill="#c43e1c"/>
<path d="M801.6 523.6 l3.4 -3.4 l3.4 3.4" fill="none" stroke="#fff" stroke-width="0.8"/>
<rect x="820.6" y="518.4" width="9" height="5.4" fill="#e8e8ea"/><rect x="819.6" y="519.8" width="1" height="2.4" fill="#e8e8ea"/><path d="M819.4 518.4 v-1.2" stroke="#e8e8ea" stroke-width="0.8"/>
<path d="M841 525 a7.4 7.4 0 0 1 7.4 -7.4 M842.8 525 a5.4 5.4 0 0 1 5.4 -5.4 M844.8 525 a3.4 3.4 0 0 1 3.4 -3.4" fill="none" stroke="#d0d0d4" stroke-width="0.8"/><circle cx="847.6" cy="524.6" r="0.9" fill="#d0d0d4"/>
<path d="M859.2 520.4 h1.8 l2.4 -2.2 v7.2 l-2.4 -2.2 h-1.8 z" fill="none" stroke="#e8e8ea" stroke-width="0.7"/><path d="M865 519.6 q1.4 2.2 0 4.4 M866.8 518.2 q2.4 3.6 0 7.2" fill="none" stroke="#e8e8ea" stroke-width="0.7"/>
<path d="M922 521.8 h8 v5 h-5 l-1.6 1.6 v-1.6 h-1.4 z" fill="#e8e8ea"/><circle cx="929.6" cy="526" r="2.4" fill="#4b4a4c" stroke="#e8e8ea" stroke-width="0.7"/>
<path d="M886.13 512.71 L891.80 517.33 M886.13 516.41 L891.80 511.79" stroke="#9a78d6" stroke-width="1.25" fill="none"/>
<path d="M885.93 512.58 V516.54" stroke="#9a78d6" stroke-width="0.66" fill="none"/>
<path d="M891.47 511.19 L892.99 510.60 L893.78 511.00 V518.12 L892.99 518.52 L891.47 517.93 z" fill="#9a78d6"/>
<path d="M891.47 511.19 L892.60 510.80 V518.32 L891.47 517.93 z" fill="#b79be6"/>
</svg>
<div class="tx">
<span id="t0" class="t" style="left:25.7px;top:6.88px;font-size:7.2px;line-height:8.64px;color:#2a2a30;transform:scaleX(0.9574);">File</span>
<span id="t1" class="t" style="left:49.7px;top:6.88px;font-size:7.2px;line-height:8.64px;color:#2a2a30;transform:scaleX(0.9927);">Edit</span>
<span id="t2" class="t" style="left:74.3px;top:6.88px;font-size:7.2px;line-height:8.64px;color:#2a2a30;transform:scaleX(0.9836);">View</span>
<span id="t3" class="t" style="left:101.9px;top:6.88px;font-size:7.2px;line-height:8.64px;color:#2a2a30;transform:scaleX(1.0190);">Project</span>
<span id="t4" class="t" style="left:136.8px;top:6.88px;font-size:7.2px;line-height:8.64px;color:#2a2a30;transform:scaleX(1.0072);">Build</span>
<span id="t5" class="t" style="left:165.9px;top:6.88px;font-size:7.2px;line-height:8.64px;color:#2a2a30;transform:scaleX(0.9959);">Debug</span>
<span id="t6" class="t" style="left:200.2px;top:6.88px;font-size:7.2px;line-height:8.64px;color:#2a2a30;transform:scaleX(0.9630);">Test</span>
<span id="t7" class="t" style="left:225px;top:6.88px;font-size:7.2px;line-height:8.64px;color:#2a2a30;transform:scaleX(0.9930);">Analyze</span>
<span id="t8" class="t" style="left:262.7px;top:6.88px;font-size:7.2px;line-height:8.64px;color:#2a2a30;transform:scaleX(1.0071);">Tools</span>
<span id="t9" class="t" style="left:292.6px;top:6.88px;font-size:7.2px;line-height:8.64px;color:#2a2a30;transform:scaleX(0.9610);">Extensions</span>
<span id="t10" class="t" style="left:338.6px;top:6.88px;font-size:7.2px;line-height:8.64px;color:#2a2a30;transform:scaleX(1.0712);">Window</span>
<span id="t11" class="t" style="left:378.3px;top:6.88px;font-size:7.2px;line-height:8.64px;color:#2a2a30;transform:scaleX(1.0475);">Help</span>
<span id="t12" class="t" style="left:409.5px;top:7.0px;font-size:7.0px;line-height:8.4px;color:#70717c;transform:scaleX(1.0138);">Search (Ctrl+Q)</span>
<span id="t13" class="t" style="left:558px;top:6.88px;font-size:7.2px;line-height:8.64px;color:#3d4d85;transform:scaleX(1.0389);">WeatherService</span>
<span id="t14" class="t" style="left:168.8px;top:24.8px;font-size:7.0px;line-height:8.4px;color:#2a2a30;transform:scaleX(1.0465);">Debug</span>
<span id="t15" class="t" style="left:212.7px;top:24.8px;font-size:7.0px;line-height:8.4px;color:#2a2a30;transform:scaleX(0.9910);">iPhone</span>
<span id="t16" class="t" style="left:284.2px;top:24.8px;font-size:7.0px;line-height:8.4px;color:#2a2a30;transform:scaleX(1.0064);">BlazorWeather.Server</span>
<span id="t17" class="t" style="left:423px;top:24.8px;font-size:7.0px;line-height:8.4px;color:#2a2a30;transform:scaleX(1.0064);">BlazorWeather.Server</span>
<span id="t18" class="t" style="left:824.2px;top:24.88px;font-size:7.2px;line-height:8.64px;color:#2a2a30;transform:scaleX(0.9484);">Live Share</span>
<span id="t19" class="t" style="left:902.7px;top:25.22px;font-size:6.8px;line-height:8.16px;color:#ffffff;font-weight:700;transform:scaleX(0.9343);">PREVIEW</span>
<span id="t20" class="t" style="left:21.6px;top:46.68px;font-size:7.2px;line-height:8.64px;color:#1e1e1e;transform:scaleX(1.0115);">ML.NET Model Builder</span>
<span id="t21" class="t" style="left:126.4px;top:46.68px;font-size:7.2px;line-height:8.64px;color:#e8ecf8;transform:scaleX(0.9732);">Forecast.razor</span>
<span id="t22" class="t" style="left:203.4px;top:46.68px;font-size:7.2px;line-height:8.64px;color:#e8ecf8;transform:scaleX(1.0068);">TemperatureUnitPicker.razor</span>
<span id="t23" class="t" style="left:327.1px;top:46.68px;font-size:7.2px;line-height:8.64px;color:#e8ecf8;transform:scaleX(1.0147);">WeatherViewModel.cs</span>
<span id="t24" class="t" style="left:430.6px;top:46.68px;font-size:7.2px;line-height:8.64px;color:#e8ecf8;transform:scaleX(1.0062);">App.xaml.cs</span>
<span id="t25" class="t" style="left:501.6px;top:46.68px;font-size:7.2px;line-height:8.64px;color:#e8ecf8;transform:scaleX(0.9936);">MLWeatherCam.razor</span>
<span id="t26" class="t" style="left:13.02px;top:44.7px;font-size:7.2px;line-height:8.64px;color:#f0f2fa;transform:rotate(90deg) scaleX(0.9691);transform-origin:0 0;">Data Sources</span>
<span id="t27" class="t" style="left:13.02px;top:95.3px;font-size:7.2px;line-height:8.64px;color:#f0f2fa;transform:rotate(90deg) scaleX(1.0371);transform-origin:0 0;">Toolbox</span>
<span id="t28" class="t" style="left:940.5200000000001px;top:44.5px;font-size:7.2px;line-height:8.64px;color:#f0f2fa;transform:rotate(90deg) scaleX(0.9858);transform-origin:0 0;">Properties</span>
<span id="t29" class="t" style="left:38.2px;top:79.0px;font-size:14px;line-height:16.8px;color:#1b1b1b;font-weight:700;transform:scaleX(1.0447);">Build your machine learning model</span>
<span id="t30" class="t" style="left:65.6px;top:109.48px;font-size:7.2px;line-height:8.64px;color:#222;transform:scaleX(0.9681);">1. Scenario</span>
<span id="t31" class="t" style="left:65.6px;top:128.08px;font-size:7.2px;line-height:8.64px;color:#222;transform:scaleX(0.9790);">2. Data</span>
<span id="t32" class="t" style="left:65.6px;top:146.48px;font-size:7.2px;line-height:8.64px;color:#222;transform:scaleX(0.9464);">3. Train</span>
<span id="t33" class="t" style="left:65.6px;top:165.28px;font-size:7.2px;line-height:8.64px;color:#222;transform:scaleX(0.9619);">4. Evaluate</span>
<span id="t34" class="t" style="left:65.6px;top:183.48px;font-size:7.2px;line-height:8.64px;color:#222;transform:scaleX(0.9608);">5. Code</span>
<span id="t35" class="t" style="left:154.5px;top:106.24px;font-size:10.6px;line-height:12.72px;color:#1b1b1b;font-weight:700;transform:scaleX(1.0166);">Evaluate</span>
<span id="t36" class="t" style="left:154.5px;top:126.94px;font-size:7.1px;line-height:8.52px;color:#222;transform:scaleX(1.0528);">Results of training for your model can be found below.</span>
<span id="t37" class="t" style="left:154.5px;top:136.74px;font-size:7.1px;line-height:8.52px;color:#2b6cb8;transform:scaleX(1.0478);">How do I understand my model performance?</span>
<span id="t38" class="t" style="left:154.5px;top:159.04px;font-size:10.6px;line-height:12.72px;color:#1b1b1b;font-weight:700;transform:scaleX(1.0859);">Output</span>
<span id="t39" class="t" style="left:154.5px;top:178.9px;font-size:7.0px;line-height:8.4px;color:#262626;transform:scaleX(0.9593);">ML Task:</span>
<span id="t40" class="t" style="left:258px;top:178.9px;font-size:7.0px;line-height:8.4px;color:#262626;transform:scaleX(1.0721);">image-classification</span>
<span id="t41" class="t" style="left:154.5px;top:188.77px;font-size:7.0px;line-height:8.4px;color:#262626;transform:scaleX(1.0162);">Dataset:</span>
<span id="t42" class="t" style="left:258px;top:188.77px;font-size:7.0px;line-height:8.4px;color:#262626;transform:scaleX(1.0654);">C:\Users\jamont\Desktop\weather</span>
<span id="t43" class="t" style="left:154.5px;top:198.64px;font-size:7.0px;line-height:8.4px;color:#262626;transform:scaleX(1.0680);">Output to predict (Label):</span>
<span id="t44" class="t" style="left:258px;top:198.64px;font-size:7.0px;line-height:8.4px;color:#262626;transform:scaleX(1.0198);">weather</span>
<span id="t45" class="t" style="left:154.5px;top:208.51px;font-size:7.0px;line-height:8.4px;color:#262626;transform:scaleX(1.0495);">Neural Network Architecture:</span>
<span id="t46" class="t" style="left:258px;top:208.51px;font-size:7.0px;line-height:8.4px;color:#262626;transform:scaleX(0.9955);">ResNet18</span>
<span id="t47" class="t" style="left:154.5px;top:218.38px;font-size:7.0px;line-height:8.4px;color:#262626;transform:scaleX(1.0360);">Best Model:</span>
<span id="t48" class="t" style="left:258px;top:218.38px;font-size:7.0px;line-height:8.4px;color:#262626;transform:scaleX(1.0270);">AveragedPerceptronOva</span>
<span id="t49" class="t" style="left:154.5px;top:228.25px;font-size:7.0px;line-height:8.4px;color:#262626;transform:scaleX(1.0251);">Best Model Accuracy:</span>
<span id="t50" class="t" style="left:258px;top:228.25px;font-size:7.0px;line-height:8.4px;color:#262626;transform:scaleX(0.9846);">75%</span>
<span id="t51" class="t" style="left:154.5px;top:238.12px;font-size:7.0px;line-height:8.4px;color:#262626;transform:scaleX(1.0319);">Training Time:</span>
<span id="t52" class="t" style="left:258px;top:238.12px;font-size:7.0px;line-height:8.4px;color:#262626;transform:scaleX(1.0052);">90 seconds</span>
<span id="t53" class="t" style="left:154.5px;top:247.99px;font-size:7.0px;line-height:8.4px;color:#262626;transform:scaleX(1.0532);">Models Explored (Total):</span>
<span id="t54" class="t" style="left:258px;top:247.99px;font-size:7.0px;line-height:8.4px;color:#262626;transform:scaleX(0.8960);">1</span>
<span id="t55" class="t" style="left:154.5px;top:269.44px;font-size:10.6px;line-height:12.72px;color:#1b1b1b;font-weight:700;transform:scaleX(1.0533);">Top 1 model explored</span>
<span id="t56" class="t" style="left:157.4px;top:293.8px;font-size:7.0px;line-height:8.4px;color:#707078;transform:scaleX(0.9851);">Rank</span>
<span id="t57" class="t" style="left:157.4px;top:305.2px;font-size:7.0px;line-height:8.4px;color:#333;transform:scaleX(0.8192);">1</span>
<span id="t58" class="t" style="left:178.1px;top:293.8px;font-size:7.0px;line-height:8.4px;color:#707078;transform:scaleX(1.0355);">Trainer</span>
<span id="t59" class="t" style="left:178.1px;top:305.2px;font-size:7.0px;line-height:8.4px;color:#333;transform:scaleX(1.0231);">AveragedPerceptronOva</span>
<span id="t60" class="t" style="left:262.4px;top:293.8px;font-size:7.0px;line-height:8.4px;color:#707078;transform:scaleX(1.0369);">MicroAccuracy</span>
<span id="t61" class="t" style="left:262.4px;top:305.2px;font-size:7.0px;line-height:8.4px;color:#333;transform:scaleX(0.8734);">0.75</span>
<span id="t62" class="t" style="left:315.6px;top:293.8px;font-size:7.0px;line-height:8.4px;color:#707078;transform:scaleX(1.0138);">MacroAccuracy</span>
<span id="t63" class="t" style="left:315.6px;top:305.2px;font-size:7.0px;line-height:8.4px;color:#333;transform:scaleX(0.9056);">0.6667</span>
<span id="t64" class="t" style="left:370px;top:293.8px;font-size:7.0px;line-height:8.4px;color:#707078;transform:scaleX(1.0654);">Duration</span>
<span id="t65" class="t" style="left:370px;top:305.2px;font-size:7.0px;line-height:8.4px;color:#333;transform:scaleX(0.8807);">61.9</span>
<span id="t66" class="t" style="left:154.5px;top:339.54px;font-size:7.1px;line-height:8.52px;color:#222;">Next Step:</span>
<span id="t67" class="t" style="left:189.8px;top:339.54px;font-size:7.1px;line-height:8.52px;color:#2b6cb8;transform:scaleX(1.0136);">Code</span>
<span id="t68" class="t" style="left:679.2px;top:47.98px;font-size:7.2px;line-height:8.64px;color:#ffffff;transform:scaleX(1.0265);">Solution Explorer</span>
<span id="t69" class="t" style="left:680.2px;top:78.6px;font-size:7.0px;line-height:8.4px;color:#6c6d78;transform:scaleX(1.0360);">Search Solution Explorer (Ctrl+;)</span>
<span id="t70" class="t" style="left:697.8px;top:91.84px;font-size:7.1px;line-height:8.52px;color:#1e1e1e;transform:scaleX(1.0279);">Solution &#x27;WeatherService&#x27; (14 of 14 projects)</span>
<span id="t71" class="t" style="left:708.9px;top:103.22px;font-size:7.1px;line-height:8.52px;color:#1e1e1e;transform:scaleX(1.0244);">Blazor</span>
<span id="t72" class="t" style="left:720px;top:114.61px;font-size:7.1px;line-height:8.52px;color:#1e1e1e;transform:scaleX(0.8854);">1</span>
<span id="t73" class="t" style="left:731.5px;top:125.99px;font-size:7.1px;line-height:8.52px;color:#1e1e1e;font-weight:700;transform:scaleX(1.0175);">BlazorWeather.Server</span>
<span id="t74" class="t" style="left:720px;top:137.38px;font-size:7.1px;line-height:8.52px;color:#1e1e1e;transform:scaleX(0.8854);">2</span>
<span id="t75" class="t" style="left:731.5px;top:148.77px;font-size:7.1px;line-height:8.52px;color:#1e1e1e;transform:scaleX(1.0099);">BlazorWeather.WebAssembly</span>
<span id="t76" class="t" style="left:720px;top:160.15px;font-size:7.1px;line-height:8.52px;color:#1e1e1e;transform:scaleX(0.8854);">3</span>
<span id="t77" class="t" style="left:720px;top:171.53px;font-size:7.1px;line-height:8.52px;color:#1e1e1e;transform:scaleX(1.0118);">BlazorWeather.Core</span>
<span id="t78" class="t" style="left:709.9px;top:172.46px;font-size:4.4px;line-height:5.28px;color:#3a3a3a;font-weight:700;transform:scaleX(0.9600);">C#</span>
<span id="t79" class="t" style="left:731.5px;top:182.92px;font-size:7.1px;line-height:8.52px;color:#1e1e1e;transform:scaleX(1.0141);">Dependencies</span>
<span id="t80" class="t" style="left:731.5px;top:194.31px;font-size:7.1px;line-height:8.52px;color:#1e1e1e;transform:scaleX(0.9193);">Pages</span>
<span id="t81" class="t" style="left:742px;top:205.69px;font-size:7.1px;line-height:8.52px;color:#1e1e1e;transform:scaleX(0.9839);">Forecast.razor</span>
<span id="t82" class="t" style="left:731.5px;top:217.08px;font-size:7.1px;line-height:8.52px;color:#1e1e1e;transform:scaleX(0.9617);">Shared</span>
<span id="t83" class="t" style="left:731.5px;top:228.46px;font-size:7.1px;line-height:8.52px;color:#1e1e1e;transform:scaleX(1.0691);">wwwroot</span>
<span id="t84" class="t" style="left:731.5px;top:239.84px;font-size:7.1px;line-height:8.52px;color:#1e1e1e;transform:scaleX(1.0058);">_Imports.razor</span>
<span id="t85" class="t" style="left:731.5px;top:251.23px;font-size:7.1px;line-height:8.52px;color:#1e1e1e;transform:scaleX(1.0401);">App.razor</span>
<span id="t86" class="t" style="left:731.5px;top:262.62px;font-size:7.1px;line-height:8.52px;color:#1e1e1e;transform:scaleX(1.0054);">MLWeatherCam.razor</span>
<span id="t87" class="t" style="left:731.5px;top:274.0px;font-size:7.1px;line-height:8.52px;color:#1e1e1e;transform:scaleX(1.0235);">TemperatureUnitPicker.razor</span>
<span id="t88" class="t" style="left:708.9px;top:285.38px;font-size:7.1px;line-height:8.52px;color:#1e1e1e;transform:scaleX(1.0411);">Desktop</span>
<span id="t89" class="t" style="left:708.9px;top:296.77px;font-size:7.1px;line-height:8.52px;color:#1e1e1e;transform:scaleX(0.9595);">k8s</span>
<span id="t90" class="t" style="left:708.9px;top:308.16px;font-size:7.1px;line-height:8.52px;color:#1e1e1e;transform:scaleX(1.0214);">MachineLearning</span>
<span id="t91" class="t" style="left:708.9px;top:319.54px;font-size:7.1px;line-height:8.52px;color:#1e1e1e;transform:scaleX(0.9854);">Server</span>
<span id="t92" class="t" style="left:708.9px;top:330.93px;font-size:7.1px;line-height:8.52px;color:#1e1e1e;transform:scaleX(1.0478);">Solution Items</span>
<span id="t93" class="t" style="left:708.9px;top:342.31px;font-size:7.1px;line-height:8.52px;color:#1e1e1e;transform:scaleX(1.0257);">Xamarin</span>
<span id="t94" class="t" style="left:708.9px;top:353.7px;font-size:7.1px;line-height:8.52px;color:#1e1e1e;transform:scaleX(1.0240);">WeatherClientLib</span>
<span id="t95" class="t" style="left:698.8px;top:354.62px;font-size:4.4px;line-height:5.28px;color:#3a3a3a;font-weight:700;transform:scaleX(0.9600);">C#</span>
<span id="t96" class="t" style="left:708.9px;top:365.08px;font-size:7.1px;line-height:8.52px;color:#1e1e1e;transform:scaleX(1.0105);">WeatherClientRestLib</span>
<span id="t97" class="t" style="left:698.8px;top:366.0px;font-size:4.4px;line-height:5.28px;color:#3a3a3a;font-weight:700;transform:scaleX(0.9600);">C#</span>
<span id="t98" class="t" style="left:680.4px;top:465.14px;font-size:7.1px;line-height:8.52px;color:#1e1e1e;transform:scaleX(1.0253);">Solution Explorer</span>
<span id="t99" class="t" style="left:743.5px;top:465.14px;font-size:7.1px;line-height:8.52px;color:#ffffff;transform:scaleX(1.0058);">Team Explorer</span>
<span id="t100" class="t" style="left:18.6px;top:480.08px;font-size:7.2px;line-height:8.64px;color:#f2f4fb;transform:scaleX(0.9553);">Find Results 1</span>
<span id="t101" class="t" style="left:71px;top:480.08px;font-size:7.2px;line-height:8.64px;color:#f2f4fb;transform:scaleX(0.9603);">Error List</span>
<span id="t102" class="t" style="left:106.8px;top:480.08px;font-size:7.2px;line-height:8.64px;color:#f2f4fb;transform:scaleX(1.0381);">Output</span>
<span id="t103" class="t" style="left:16.6px;top:498.68px;font-size:7.2px;line-height:8.64px;color:#ffffff;transform:scaleX(0.9480);">Ready</span>
<span id="t104" class="t" style="left:746.5px;top:498.68px;font-size:7.2px;line-height:8.64px;color:#ffffff;transform:scaleX(1.0750);">0</span>
<span id="t105" class="t" style="left:777.5px;top:498.68px;font-size:7.2px;line-height:8.64px;color:#ffffff;transform:scaleX(0.9500);">3</span>
<span id="t106" class="t" style="left:808px;top:498.68px;font-size:7.2px;line-height:8.64px;color:#ffffff;transform:scaleX(0.9983);">Weather</span>
<span id="t107" class="t" style="left:862.6px;top:498.68px;font-size:7.2px;line-height:8.64px;color:#ffffff;transform:scaleX(1.0610);">demo-ready</span>
<span id="t108" class="t" style="left:878px;top:523.6px;font-size:7.0px;line-height:8.4px;color:#ffffff;transform:scaleX(1.0752);">9/23/2019</span>
<span id="t109" class="t" style="left:879.5px;top:512.9px;font-size:7.0px;line-height:8.4px;color:#ffffff;transform:scaleX(0.8960);">1</span>
<span id="t110" class="t" style="left:900.2px;top:512.04px;font-size:5.6px;line-height:6.72px;color:#ffffff;font-weight:700;transform:scaleX(0.9954);">SUBSCRIBE</span>
<span id="t111" class="t" style="left:130px;top:520.24px;font-size:3.6px;line-height:4.32px;color:#1a2a10;font-weight:700;transform:scaleX(1.1636);">DEV</span>
<span id="t112" class="t" style="left:375.4px;top:518.84px;font-size:5.6px;line-height:6.72px;color:#ffffff;font-weight:700;transform:scaleX(0.9640);">P</span>
</div>
</body></html>
